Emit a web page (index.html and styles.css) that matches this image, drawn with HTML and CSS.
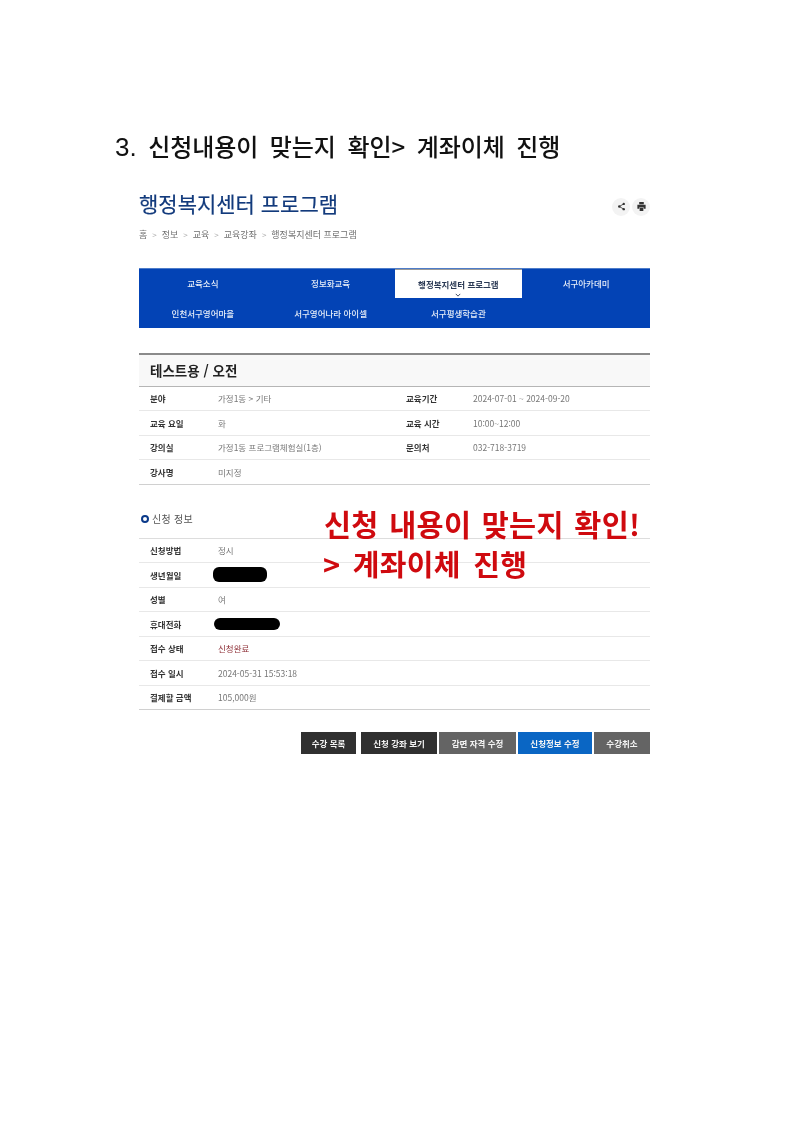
FILE: index.html
```html
<!DOCTYPE html>
<html lang="ko">
<head>
<meta charset="utf-8">
<title>신청 내용 확인</title>
<link rel="stylesheet" href="styles.css">
</head>
<body>
<main class="doc">
  <h1 class="doc-title"><span class="num">3.</span> 신청내용이 맞는지 확인&gt; 계좌이체 진행</h1>
  <section class="shot">
    <header class="top">
      <h2 class="page-title">행정복지센터 프로그램</h2>
      <div class="tools">
        <span class="tool"><svg viewBox="0 0 12 12" width="9" height="9"><path d="M9 2.5 3 6l6 3.5" fill="none" stroke="#333" stroke-width="1.1"/><circle cx="9" cy="2.5" r="1.6" fill="#333"/><circle cx="3" cy="6" r="1.6" fill="#333"/><circle cx="9" cy="9.5" r="1.6" fill="#333"/></svg></span>
        <span class="tool"><svg viewBox="0 0 12 12" width="11" height="11"><path d="M3.5 1h5v2.5h-5zM1.5 4h9v4.5h-2V7h-5v1.5h-2zM4 7.6h4V11H4z" fill="#333"/></svg></span>
      </div>
    </header>
    <nav class="crumbs">
      <span>홈</span><i>&gt;</i><span>정보</span><i>&gt;</i><span>교육</span><i>&gt;</i><span>교육강좌</span><i>&gt;</i><span>행정복지센터 프로그램</span>
    </nav>
    <nav class="tabs">
      <a>교육소식</a><a>정보화교육</a>
      <a class="active">행정복지센터 프로그램<svg class="chev" viewBox="0 0 8 5" width="6" height="4"><path d="M1 1l3 3 3-3" fill="none" stroke="#2b3a55" stroke-width="1.2"/></svg></a>
      <a>서구아카데미</a>
      <a>인천서구영어마을</a><a>서구영어나라 아이셀</a><a>서구평생학습관</a><a></a>
    </nav>
    <h3 class="course">테스트용 / 오전</h3>
    <div class="rows">
      <div class="row four"><b>분야</b><span>가정1동 &gt; 기타</span><b>교육기간</b><span>2024-07-01 ~ 2024-09-20</span></div>
      <div class="row four"><b>교육 요일</b><span>화</span><b>교육 시간</b><span>10:00~12:00</span></div>
      <div class="row four"><b>강의실</b><span>가정1동 프로그램체험실(1층)</span><b>문의처</b><span>032-718-3719</span></div>
      <div class="row four"><b>강사명</b><span>미지정</span></div>
    </div>
    <h4 class="section"><span class="bullet"></span>신청 정보</h4>
    <div class="rows second">
      <div class="row"><b>신청방법</b><span>정시</span></div>
      <div class="row"><b>생년월일</b><span class="redact r1"></span></div>
      <div class="row"><b>성별</b><span>여</span></div>
      <div class="row"><b>휴대전화</b><span class="redact r2"></span></div>
      <div class="row"><b>접수 상태</b><span class="done">신청완료</span></div>
      <div class="row"><b>접수 일시</b><span>2024-05-31 15:53:18</span></div>
      <div class="row"><b>결제할 금액</b><span>105,000원</span></div>
    </div>
    <div class="actions">
      <a class="btn dark w55">수강 목록</a>
      <a class="btn dark w76">신청 강좌 보기</a>
      <a class="btn grey w77">감면 자격 수정</a>
      <a class="btn blue w74">신청정보 수정</a>
      <a class="btn grey w56">수강취소</a>
    </div>
    <p class="note">신청 내용이 맞는지 확인!<br><span class="note-2">&gt; 계좌이체 진행</span></p>
  </section>
</main>
</body>
</html>
```
FILE: styles.css
```css
* { box-sizing: border-box; }
html, body { margin: 0; padding: 0; background: #fff; }
body { font-family: "Noto Sans CJK KR", "Noto Sans", sans-serif; color: #333; height: 1131px; overflow: hidden; }
.doc { padding: 129px 0 0 115px; filter: blur(0.25px); }
.doc-title { margin: 0; font-size: 24px; line-height: 34px; font-weight: 500; color: #111; word-spacing: 5px; letter-spacing: -0.08px; white-space: nowrap; }
.num { font-family: "Liberation Sans", sans-serif; font-weight: 400; font-size: 26px; margin-right: 0; }
.shot { position: relative; width: 511px; margin: 20.5px 0 0 24px; }
.top { display: flex; justify-content: space-between; align-items: center; height: 36px; }
.page-title { margin: 0; font-size: 21px; line-height: 36px; font-weight: 400; color: #123a7c; -webkit-text-stroke: 0.2px #123a7c; letter-spacing: 0; }
.tools { display: flex; gap: 2px; margin-top: 8px; }
.tool { width: 18px; height: 18px; border-radius: 50%; background: #f3f3f3; display: flex; align-items: center; justify-content: center; }
.crumbs { display: flex; align-items: center; height: 20px; margin-top: 4px; font-size: 9px; color: #6f6f6f; }
.crumbs i { font-style: normal; font-size: 8px; color: #aaa; margin: 0 5px; }
.tabs { display: grid; grid-template-columns: repeat(4, 1fr); grid-auto-rows: 29.5px; height: 60px; margin-top: 23px; background: #0343b5; border-top: 1px solid #4d7cc9; }
.tabs a { display: flex; align-items: center; justify-content: center; font-size: 8.5px; font-weight: 500; color: #e6edf8; position: relative; }
.tabs a.active { background: #fff; color: #2b3a55; font-weight: 700; border-top: 1px solid #999; }
.chev { position: absolute; left: 50%; margin-left: -3px; bottom: 1px; }
.course { margin: 25px 0 0; height: 34px; line-height: 31px; padding-left: 11px; font-size: 13.5px; font-weight: 700; color: #222; background: #f8f8f8; border-top: 2px solid #8a8a8a; border-bottom: 1px solid #b5b5b5; }
.rows { display: flex; flex-direction: column; }
.row { display: grid; grid-template-columns: 68px 1fr; align-items: center; height: 24.5px; padding-left: 11px; border-bottom: 1px solid #e8e8e8; font-size: 8.5px; }
.row.four { grid-template-columns: 68px 188px 67px 1fr; }
.row b { font-weight: 700; color: #333; }
.row span { color: #777; }
.rows .row:last-child { border-bottom-color: #d0d0d0; }
.section { display: flex; align-items: center; margin: 22px 0 0; height: 24px; padding-left: 2px; font-size: 10px; font-weight: 400; color: #555; letter-spacing: 0.3px; }
.bullet { width: 8px; height: 8px; margin-right: 3px; border-radius: 50%; border: 2.5px solid #0b3a8a; background: #fff; }
.second { margin-top: 7px; border-top: 1px solid #ddd; }
.row span.done { color: #8c2b33; }
.redact { display: block; background: #000; }
.r1 { width: 54px; height: 15px; margin-left: -5px; border-radius: 6px; }
.r2 { width: 66px; height: 12px; margin-left: -4px; border-radius: 6px; }
.actions { display: flex; justify-content: flex-end; gap: 2px; margin-top: 22px; }
.btn { display: flex; align-items: center; justify-content: center; height: 22px; font-size: 8.5px; font-weight: 700; color: #f4f4f4; }
.dark { background: #303030; }
.grey { background: #646464; }
.blue { background: #0a66c4; }
.w55 { width: 55px; margin-right: 3px; }
.w76 { width: 76px; }
.w77 { width: 77px; }
.w74 { width: 74px; }
.w56 { width: 56px; }
.note { position: absolute; left: 185px; top: 318.5px; margin: 0; font-size: 29.4px; line-height: 40px; font-weight: 700; color: #cf0a0f; word-spacing: 2px; white-space: nowrap; letter-spacing: 0.3px; }
.note-2 { font-size: 29px; word-spacing: 4px; margin-left: -1px; }
```
